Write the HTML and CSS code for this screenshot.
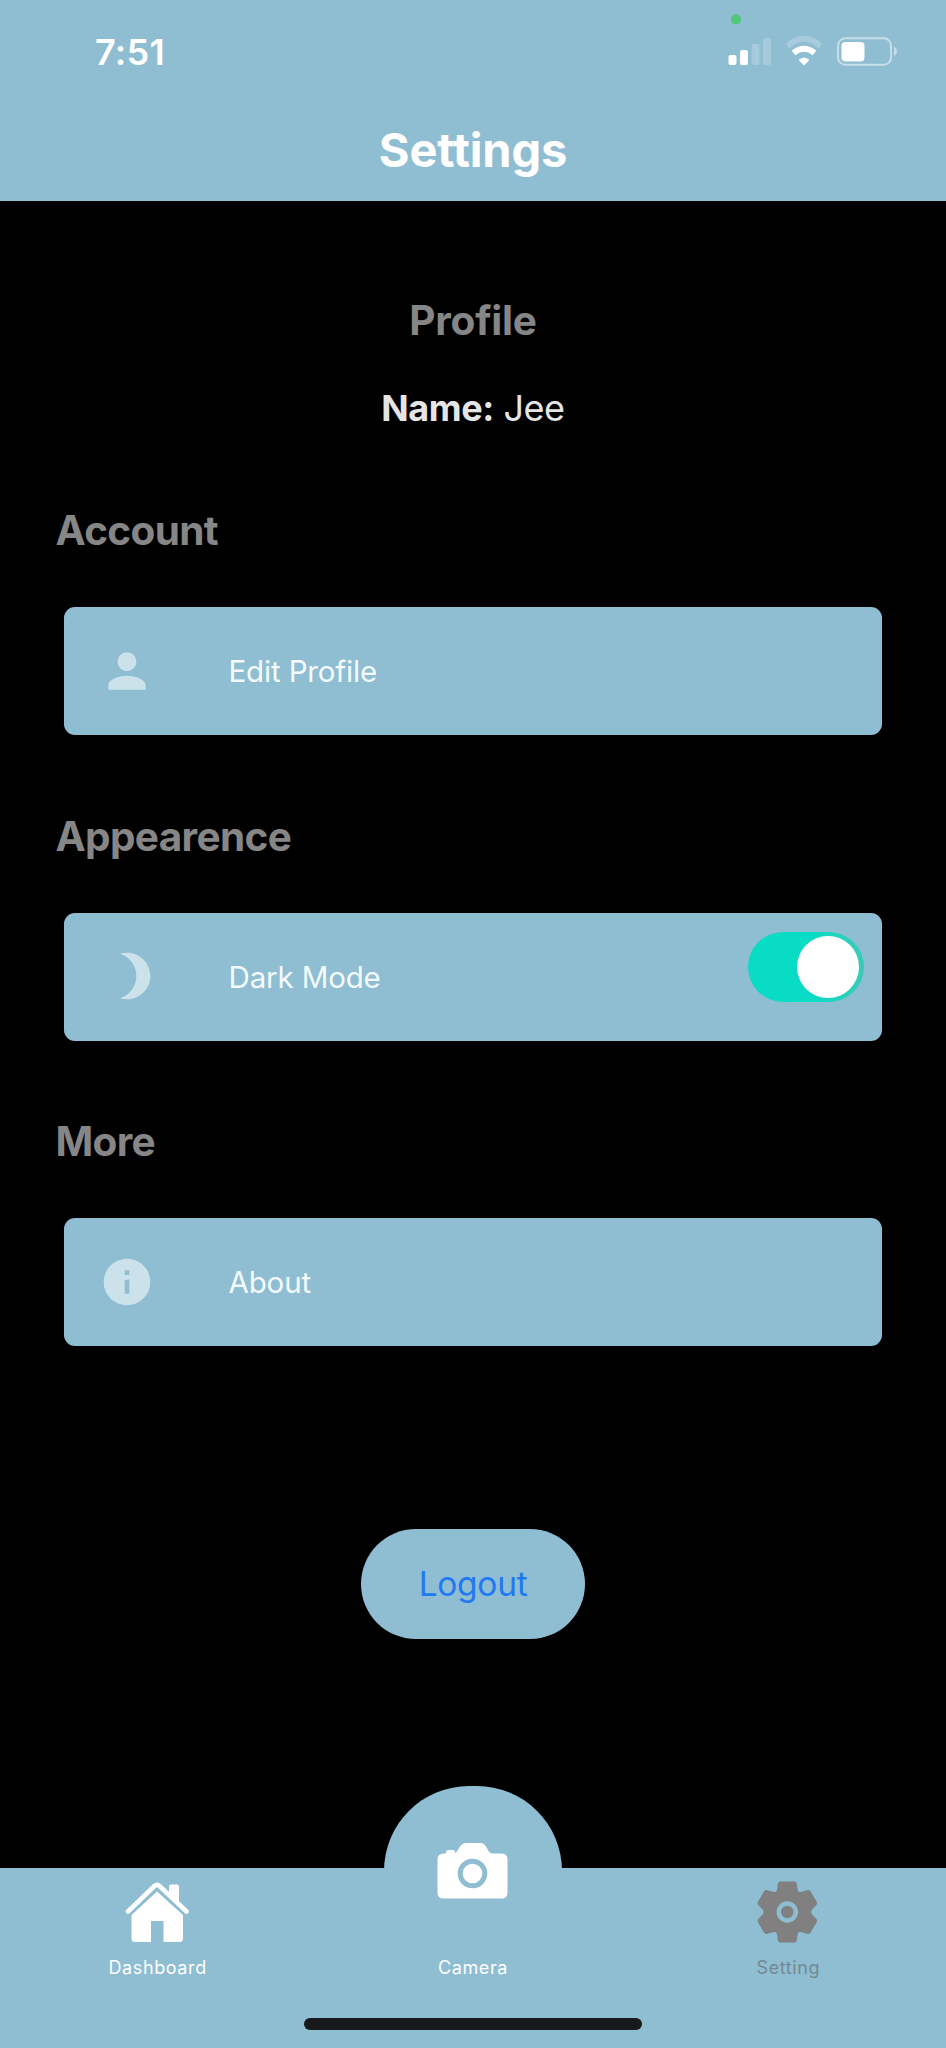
FILE: index.html
```
<!DOCTYPE html>
<html lang="en">
<head>
<meta charset="utf-8">
<title>Settings</title>
<link rel="stylesheet" href="styles.css">
</head>
<body>
<div class="screen">
  <header class="header">
    <div class="status-bar">
      <span class="time">7:51</span>
      <svg class="status-icons" width="172" height="60" viewBox="0 0 172 60">
        <circle cx="12" cy="9.500" r="5" fill="#4fc878"/>
        <g fill="#fff">
          <rect x="4.500" y="45" width="8" height="10" rx="2"/>
          <rect x="16" y="40" width="8" height="15" rx="2"/>
          <rect x="27.500" y="34" width="8" height="21" rx="2" opacity=".2"/>
          <rect x="39" y="28" width="8" height="27" rx="2" opacity=".2"/>
        </g>
        <g fill="none" stroke="#fff">
          <path d="M63.500 36Q80 21.500 96.500 36" stroke-width="6" opacity=".22"/>
          <path d="M69.500 43Q80 34.500 90.500 43" stroke-width="6"/>
        </g>
        <path d="M74.500 50Q80 45 85.500 50L80 55.500Z" fill="#fff"/>
        <rect x="114" y="28.200" width="53" height="26.600" rx="7.500" fill="none" stroke="#fff" stroke-width="2" opacity=".5"/>
        <rect x="117.500" y="32" width="23" height="19.500" rx="4" fill="#fff"/>
        <path d="M170 36.500q3 2 3 5t-3 5z" fill="#fff" opacity=".5"/>
      </svg>
    </div>
    <h1 class="title">Settings</h1>
  </header>

  <main class="content">
    <section class="profile">
      <h2 class="heading heading-profile">Profile</h2>
      <p class="name"><b>Name:</b> Jee</p>
    </section>

    <section class="group">
      <h2 class="heading">Account</h2>
      <div class="card">
        <svg class="icon" viewBox="0 0 24 24"><path d="M12 12c2.210 0 4-1.790 4-4s-1.790-4-4-4-4 1.790-4 4 1.790 4 4 4zm0 2c-2.670 0-8 1.340-8 4v2h16v-2c0-2.660-5.330-4-8-4z"/></svg>
        <span class="label">Edit Profile</span>
      </div>
    </section>

    <section class="group">
      <h2 class="heading">Appearence</h2>
      <div class="card">
        <svg class="icon" viewBox="0 0 24 24"><path d="M12 2c-1.050 0-2.050.16-3 .46 4.060 1.270 7 5.060 7 9.540s-2.940 8.270-7 9.540c.95.3 1.950.46 3 .46 5.520 0 10-4.480 10-10S17.520 2 12 2z"/></svg>
        <span class="label">Dark Mode</span>
        <span class="switch"><span class="thumb"></span></span>
      </div>
    </section>

    <section class="group">
      <h2 class="heading">More</h2>
      <div class="card">
        <svg class="icon" viewBox="0 0 24 24"><path fill-rule="evenodd" d="M12 2a10 10 0 1 0 0 20 10 10 0 0 0 0-20zM11 7h2v2h-2zM11 11h2v6h-2z"/></svg>
        <span class="label">About</span>
      </div>
    </section>

    <button class="logout">Logout</button>
  </main>

  <nav class="tabs">
    <div class="tab">
      <svg class="tab-icon" width="66" height="64" viewBox="1 0 66 64">
        <path d="M45 15V6.500Q45 4.500 47 4.500H53Q55 4.500 55 6.500V24Z" fill="#fff"/>
        <path d="M4 31.500L30.500 6Q33 3.800 35.500 6L62.500 31.500" fill="none" stroke="#fff" stroke-width="4.600" stroke-linecap="round"/>
        <path d="M33 11.500L59 35V58.500Q59 62 55.500 62H39.500V41H27V62H11Q7.500 62 7.500 58.500V35Z" fill="#fff"/>
      </svg>
      <span class="tab-label">Dashboard</span>
    </div>
    <div class="tab tab-camera">
      <div class="bump"></div>
      <svg class="tab-icon" width="72" height="58" viewBox="0.500 0 72 58">
        <path d="M7 11.500H9.500V10Q9.500 8 12 8H16Q18.500 8 18.500 10V11Q20 10.500 21 8.500L23.500 4.500Q26 1 29.500 1H44Q47.500 1 49.500 4.500L52 9Q53.500 11.500 56 11.500H65Q71 11.500 71 17.500V50.500Q71 56.500 65 56.500H7Q1 56.500 1 50.500V17.500Q1 11.500 7 11.500Z" fill="#fff"/>
        <circle cx="36" cy="31.500" r="12.300" fill="#fff" stroke="#8fbdd2" stroke-width="5"/>
      </svg>
      <span class="tab-label">Camera</span>
    </div>
    <div class="tab tab-active">
      <svg class="tab-icon" width="66" height="64" viewBox="0.700 0 66 64">
        <path d="M26 1.500H40Q42 1.500 42.400 3.500L43.300 10Q43.800 12.500 46.500 12L53 10.200Q55.300 9.800 56.400 11.500L62.500 22Q63.300 23.800 62 25L57.800 29.500Q55.800 32 57.800 34.500L62 39Q63.300 40.300 62.500 42L56.400 52.500Q55.300 54.200 53 53.800L46.500 52Q43.800 51.500 43.300 54L42.400 60.500Q42 62.500 40 62.500H26Q24 62.500 23.600 60.500L22.700 54Q22.200 51.500 19.500 52L13 53.800Q10.700 54.200 9.600 52.500L3.500 42Q2.700 40.300 4 39L8.200 34.500Q10.200 32 8.200 29.500L4 25Q2.700 23.800 3.500 22L9.600 11.500Q10.700 9.800 13 10.200L19.500 12Q22.200 12.500 22.700 10L23.600 3.500Q24 1.500 26 1.500Z" fill="#808080"/>
        <circle cx="33" cy="32" r="8.500" fill="none" stroke="#8fbdd2" stroke-width="4.500"/>
      </svg>
      <span class="tab-label">Setting</span>
    </div>
    <div class="home-indicator"></div>
  </nav>
</div>
</body>
</html>
```
FILE: styles.css
```
* { box-sizing: border-box; }

body {
  margin: 0;
  background: #000;
  font-family: Inter, "Liberation Sans", sans-serif;
}

h1, h2, p { margin: 0; }

.screen {
  display: flex;
  flex-direction: column;
  width: 946px;
  height: 2048px;
  overflow: hidden;
}

.header {
  height: 201px;
  background: #8fbdd2;
  color: #fff;
}

.status-bar {
  display: flex;
  justify-content: space-between;
  height: 104px;
  padding: 10px 50px 0 95px;
}

.time {
  height: 84px;
  font-size: 36px;
  font-weight: 600;
  line-height: 84px;
  letter-spacing: 0.300px;
}

.status-icons {
  display: block;
  overflow: visible;
}

.title {
  font-size: 47px;
  font-weight: 700;
  line-height: 92px;
  letter-spacing: -0.150px;
  text-align: center;
}

.content {
  display: flex;
  flex: 1;
  flex-direction: column;
}

.heading {
  color: #868686;
  font-size: 40.500px;
  font-weight: 700;
  line-height: 52px;
  letter-spacing: -0.650px;
}

.heading-profile { letter-spacing: -0.250px; }

.profile {
  height: 304px;
  padding-top: 94px;
  text-align: center;
}

.name {
  margin-top: 39px;
  color: #e5e5e5;
  font-size: 36px;
  line-height: 44px;
  letter-spacing: -0.450px;
}

.name b { font-weight: 700; }

.group {
  height: 305.700px;
  padding: 0 64px 0 55.500px;
}

.card {
  display: flex;
  align-items: center;
  height: 128px;
  margin: 50px 0 0 8.500px;
  padding: 0 18px 0 35px;
  border-radius: 11px;
  background: #8fbdd2;
}

.icon {
  width: 56px;
  height: 56px;
  margin-top: -1px;
  fill: #cbe2ea;
}

.label {
  margin-left: 73.500px;
  color: #f4fbfe;
  font-size: 29.500px;
  letter-spacing: -0.150px;
}

.switch {
  display: flex;
  justify-content: flex-end;
  width: 116px;
  height: 70px;
  margin: 0 0 20px auto;
  padding: 4px 5px;
  border-radius: 35px;
  background: linear-gradient(90deg, #08dcc4 55%, #3cc9b9);
}

.thumb {
  width: 62px;
  height: 62px;
  border-radius: 50%;
  background: #fff;
}

.logout {
  align-self: center;
  width: 224px;
  height: 110px;
  margin-top: 107px;
  border: 0;
  border-radius: 55px;
  background: #8fbdd2;
  color: #2279f5;
  font: 400 33.500px Inter, sans-serif;
  letter-spacing: -0.300px;
}

.tabs {
  position: relative;
  display: flex;
  height: 180px;
  background: #8fbdd2;
}

.tab {
  position: relative;
  display: flex;
  flex: 1;
  flex-direction: column;
  align-items: center;
  justify-content: space-between;
  height: 112px;
  padding-top: 12px;
  color: #fff;
}

.tab-active { color: #748992; }

.tab-camera {
  height: 138px;
  margin-top: -26px;
  padding-top: 0;
}

.bump {
  position: absolute;
  top: -56px;
  left: 50%;
  width: 178px;
  height: 140px;
  margin-left: -89px;
  border-radius: 85px 85px 0 0;
  background: #8fbdd2;
}

.tab-icon { position: relative; }

.tab-label {
  position: relative;
  font-size: 18px;
  line-height: 24px;
  letter-spacing: 0.600px;
}

.home-indicator {
  position: absolute;
  bottom: 18px;
  left: 304px;
  width: 338px;
  height: 12px;
  border-radius: 6px;
  background: #17191a;
}
```
